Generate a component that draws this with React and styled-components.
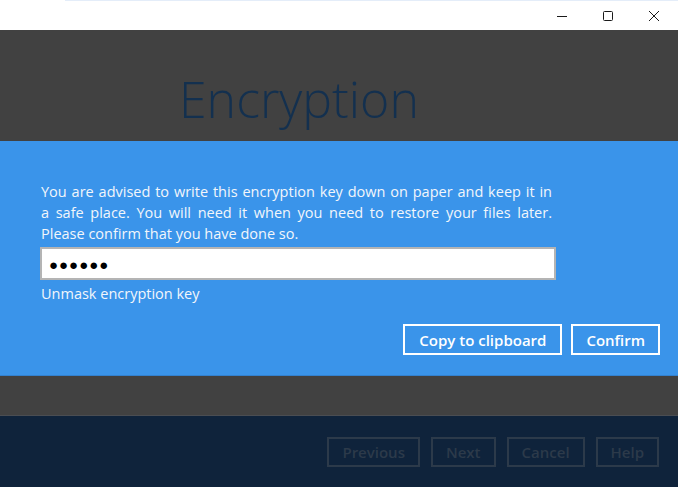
import React from 'react';
import styled, {createGlobalStyle} from 'styled-components';

const GlobalStyle = createGlobalStyle`
    body {
        margin: 0;
        font-family: "Open Sans", "Liberation Sans", sans-serif;
    }
`

const Window = styled.div`
    width: 678px;
    height: 487px;
    display: flex;
    flex-direction: column;
    overflow: hidden;
    background: #414141;
`

const TitleBar = styled.div`
    height: 30px;
    background: #ffffff;
    display: flex;
    flex-direction: column;
    flex-shrink: 0;
`

const TopEdge = styled.div`
    height: 1px;
    margin-left: 65px;
    background: #e4edf9;
`

const Controls = styled.div`
    flex: 1;
    display: flex;
    justify-content: flex-end;
    align-items: center;
    padding-right: 1px;
`

const ControlButton = styled.div`
    width: 46px;
    height: 29px;
    display: flex;
    align-items: center;
    justify-content: center;
    color: #1a1a1a;
`

const Main = styled.div`
    flex: 1;
    display: flex;
    flex-direction: column;
    background: #414141;
`

const Header = styled.div`
    height: 111px;
    box-sizing: border-box;
    padding: 39px 0 0 179px;
`

const Title = styled.h1`
    margin: 0;
    font-weight: 300;
    font-size: 50px;
    line-height: 60px;
    color: #13304f;
`

const Panel = styled.div`
    height: 235px;
    background: #3a94ea;
    border-bottom: 1px solid #3381cf;
    padding: 40px 19px 0 41px;
    box-sizing: border-box;
    display: flex;
    flex-direction: column;
`

const Message = styled.div`
    width: 511px;
    font-size: 14.5px;
    line-height: 21px;
    color: #f2f6fb;
`

const Line = styled.div`
    text-align: ${p => p.$last ? 'left' : 'justify'};
    text-align-last: ${p => p.$last ? 'left' : 'justify'};
    white-space: nowrap;
`

const KeyField = styled.div`
    width: 516px;
    height: 33px;
    margin: 3px 0 0 -1px;
    box-sizing: border-box;
    border: 2px solid #b4b4b4;
    background: #ffffff;
    display: flex;
    align-items: center;
    padding-left: 7px;
    font-size: 15px;
    letter-spacing: 1px;
    color: #000;
`

const Link = styled.div`
    margin-top: 3px;
    font-size: 14.5px;
    line-height: 21px;
    color: #f2f6fb;
`

const Actions = styled.div`
    display: flex;
    justify-content: flex-end;
    gap: 9px;
    margin-top: 20px;
    margin-right: -1px;
`

const Button = styled.button`
    height: ${p => p.$dim ? 30 : 31}px;
    padding: 0 ${p => p.$pad || 13}px;
    box-sizing: border-box;
    background: transparent;
    border: 2px solid ${p => p.$dim ? '#2c3a4a' : '#ffffff'};
    color: ${p => p.$dim ? '#2c3a4a' : '#ffffff'};
    font-family: "Open Sans", "Liberation Sans", sans-serif;
    font-size: 15px;
    font-weight: 600;
    cursor: pointer;
`

const Footer = styled.div`
    height: 72px;
    flex-shrink: 0;
    background: #0f233b;
    border-top: 1px solid #4a4d52;
    box-sizing: border-box;
    display: flex;
    justify-content: flex-end;
    align-items: flex-start;
    gap: 11px;
    padding: 21px 19px 0 0;
`

const Minimize = () => (
    <svg width="12" height="12" viewBox="0 0 12 12">
        <path d="M1 6.5h10" stroke="currentColor" strokeWidth="1"/>
    </svg>
)

const Maximize = () => (
    <svg width="12" height="12" viewBox="0 0 12 12">
        <rect x="1.5" y="1.5" width="9" height="9" rx="1" fill="none" stroke="currentColor" strokeWidth="1"/>
    </svg>
)

const Close = () => (
    <svg width="12" height="12" viewBox="0 0 12 12">
        <path d="M1 1l10 10M11 1L1 11" stroke="currentColor" strokeWidth="1"/>
    </svg>
)

export default function App() {
    return (
        <Window>
            <GlobalStyle/>
            <TitleBar>
                <TopEdge/>
                <Controls>
                    <ControlButton><Minimize/></ControlButton>
                    <ControlButton><Maximize/></ControlButton>
                    <ControlButton><Close/></ControlButton>
                </Controls>
            </TitleBar>
            <Main>
                <Header>
                    <Title>Encryption</Title>
                </Header>
                <Panel>
                    <Message>
                        <Line>You are advised to write this encryption key down on paper and keep it in</Line>
                        <Line>a safe place. You will need it when you need to restore your files later.</Line>
                        <Line $last>Please confirm that you have done so.</Line>
                    </Message>
                    <KeyField>●●●●●●</KeyField>
                    <Link>Unmask encryption key</Link>
                    <Actions>
                        <Button $pad={14}>Copy to clipboard</Button>
                        <Button $pad={13}>Confirm</Button>
                    </Actions>
                </Panel>
            </Main>
            <Footer>
                <Button $dim>Previous</Button>
                <Button $dim>Next</Button>
                <Button $dim>Cancel</Button>
                <Button $dim>Help</Button>
            </Footer>
        </Window>
    );
}
